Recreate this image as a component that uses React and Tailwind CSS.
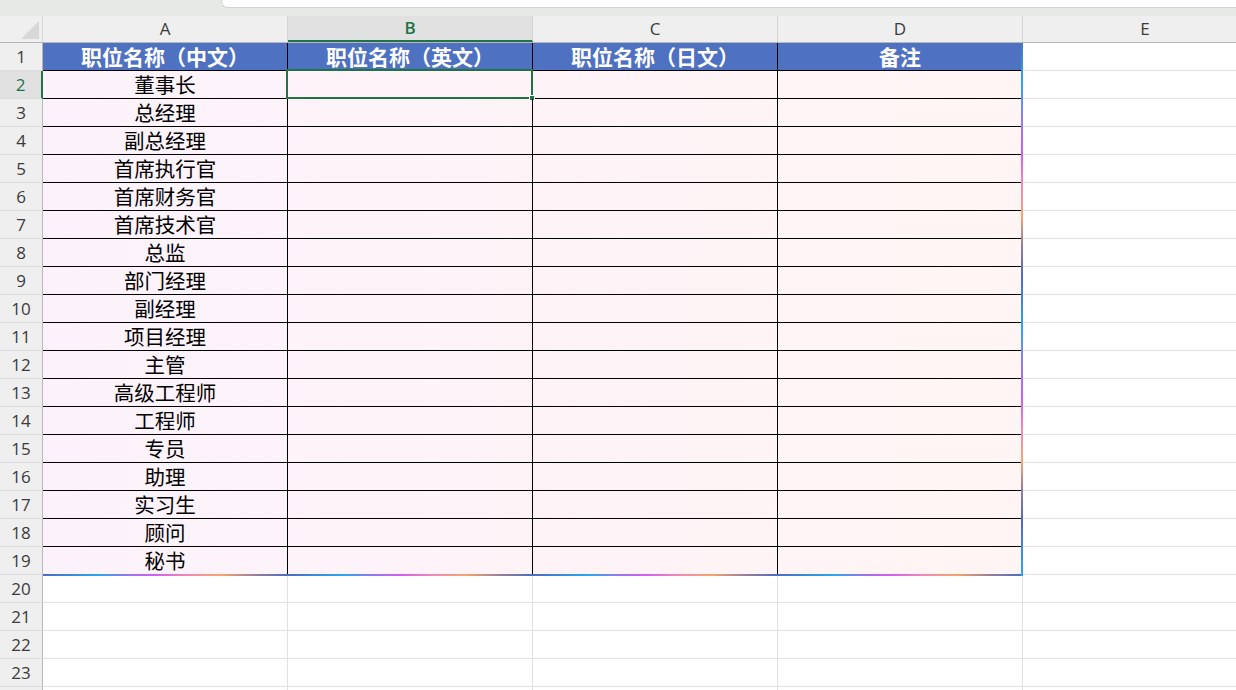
import React from "react"

const cols = ["A", "B", "C", "D"]
const heads = ["职位名称（中文）", "职位名称（英文）", "职位名称（日文）", "备注"]
const titles = [
  "董事长", "总经理", "副总经理", "首席执行官", "首席财务官", "首席技术官",
  "总监", "部门经理", "副经理", "项目经理", "主管", "高级工程师",
  "工程师", "专员", "助理", "实习生", "顾问", "秘书",
]

const cjk = "font-['Noto_Sans_CJK_SC',sans-serif]"
const latin = "font-['Open_Sans',sans-serif]"

function RowHead({ n, active }) {
  return (
    <div
      className={`w-[43px] shrink-0 h-full flex items-center justify-center border-b border-[#dcdcdc] ${latin} text-[17px] ${
        active
          ? "bg-[#e1e1e1] border-r-2 border-r-[#217346] text-[#217346]"
          : "bg-[#efefef] border-r border-r-[#b8b8b8] text-[#3b3b3b]"
      }`}
    >
      {n}
    </div>
  )
}

function Selection() {
  return (
    <div className="absolute -left-[2px] -top-[2px] -right-[1px] -bottom-[1px] border-2 border-[#217346] pointer-events-none">
      <div className="absolute -right-[4px] -bottom-[4px] w-[6px] h-[6px] bg-[#217346] border border-white" />
    </div>
  )
}

export default function App() {
  return (
    <div className="w-[1236px] h-[690px] overflow-hidden bg-white select-none">
      {/* top strip with the formula bar edge */}
      <div className="h-[16px] bg-[#e6e9e6] flex">
        <div className="w-[221px]" />
        <div className="flex-1 h-[8px] bg-white border-l border-b border-[#d2d4d2] rounded-bl-[6px]" />
      </div>

      {/* column letters */}
      <div className="h-[27px] flex bg-[#efefef] border-b border-[#b8b8b8]">
        <div className="w-[43px] shrink-0 border-r border-[#d4d4d4] flex items-end justify-end pr-[3px] pb-[3px]">
          <div className="w-0 h-0 border-l-[18px] border-l-transparent border-b-[18px] border-b-[#d8d8d8]" />
        </div>
        {[...cols, "E"].map((c) => (
          <div
            key={c}
            className={`w-[245px] shrink-0 border-r border-[#d4d4d4] flex items-center justify-center ${latin} text-[17px] ${
              c === "B"
                ? "bg-[#e1e1e1] text-[#217346] border-b-2 border-b-[#217346] font-semibold"
                : "text-[#3b3b3b]"
            }`}
          >
            {c}
          </div>
        ))}
        <div className="flex-1" />
      </div>

      {/* data range */}
      <div className="relative">
        <div className="h-[28px] flex">
          <RowHead n={1} />
          <div className="flex w-[980px] shrink-0 bg-[#4f71c1]">
            {heads.map((h) => (
              <div
                key={h}
                className={`w-[245px] border-r border-b border-black flex items-center justify-center ${cjk} text-[21px] font-bold text-white`}
              >
                {h}
              </div>
            ))}
          </div>
          <div className="flex-1 border-b border-[#e1e1e1]" />
        </div>

        {titles.map((t, i) => (
          <div key={t} className="h-[28px] flex">
            <RowHead n={i + 2} active={i === 0} />
            <div className="flex w-[980px] shrink-0 bg-gradient-to-r from-[#fcf2fb] to-[#fff5f4]">
              <div className={`w-[245px] border-r border-b border-black flex items-center justify-center ${cjk} text-[20.5px] text-black`}>
                {t}
              </div>
              <div className="relative w-[245px] border-r border-b border-black">
                {i === 0 && <Selection />}
              </div>
              <div className="w-[245px] border-r border-b border-black" />
              <div className="w-[245px] border-r border-b border-black" />
            </div>
            <div className="flex-1 border-b border-[#e1e1e1]" />
          </div>
        ))}

        {/* glowing edge round the range */}
        <div className="absolute left-[43px] w-[980px] -bottom-[1px] h-[2px] bg-[repeating-linear-gradient(90deg,#4a6dc4_0px,#2aa6f2_55px,#9c74f0_88px,#d35ef2_112px,#f08ab8_145px,#f7a56d_178px,#9a7f98_212px,#4a6dc4_245px)]" />
        <div className="absolute left-[1021px] w-[2px] top-0 -bottom-[1px] bg-[repeating-linear-gradient(180deg,#2aa6f2_42px,#9a78f0_80px,#d35ef2_112px,#f08ab8_142px,#f7a56d_174px,#9a7f98_200px,#4a6dc4_232px,#2aa6f2_287px)]" />
      </div>

      {/* empty rows below */}
      {[20, 21, 22, 23, null].map((n, k) => (
        <div key={k} className="h-[28px] flex">
          <RowHead n={n} />
          {cols.map((c) => (
            <div key={c} className="w-[245px] shrink-0 border-r border-b border-[#e1e1e1]" />
          ))}
          <div className="flex-1 border-b border-[#e1e1e1]" />
        </div>
      ))}
    </div>
  )
}
